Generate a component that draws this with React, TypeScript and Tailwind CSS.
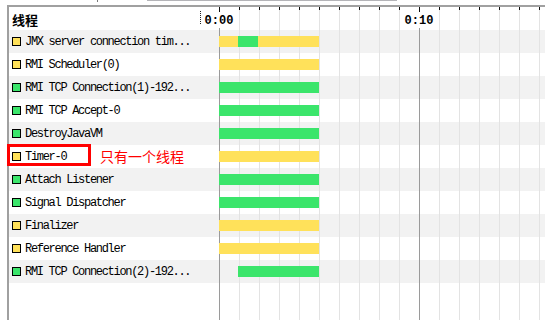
import React from "react";

type Seg = { s: number; w: number; c: "y" | "g" };
type Row = { name: string; c: "y" | "g"; segs: Seg[]; mark?: boolean };

const Y = "#ffe15a";
const G = "#3be56b";

const rows: Row[] = [
  { name: "JMX server connection tim...", c: "y", segs: [{ s: 0, w: 19, c: "y" }, { s: 19, w: 20, c: "g" }, { s: 39, w: 61, c: "y" }] },
  { name: "RMI Scheduler(0)", c: "y", segs: [{ s: 0, w: 100, c: "y" }] },
  { name: "RMI TCP Connection(1)-192...", c: "g", segs: [{ s: 0, w: 100, c: "g" }] },
  { name: "RMI TCP Accept-0", c: "g", segs: [{ s: 0, w: 100, c: "g" }] },
  { name: "DestroyJavaVM", c: "g", segs: [{ s: 0, w: 100, c: "g" }] },
  { name: "Timer-0", c: "y", segs: [{ s: 0, w: 100, c: "y" }], mark: true },
  { name: "Attach Listener", c: "g", segs: [{ s: 0, w: 100, c: "g" }] },
  { name: "Signal Dispatcher", c: "g", segs: [{ s: 0, w: 100, c: "g" }] },
  { name: "Finalizer", c: "y", segs: [{ s: 0, w: 100, c: "y" }] },
  { name: "Reference Handler", c: "y", segs: [{ s: 0, w: 100, c: "y" }] },
  { name: "RMI TCP Connection(2)-192...", c: "g", segs: [{ s: 19, w: 81, c: "g" }] },
];

function Grid() {
  const minors: number[] = [];
  for (let x = 239; x < 545; x += 20) if (x !== 419) minors.push(x);
  const ticks: number[] = [];
  for (let x = 219; x < 545; x += 20) ticks.push(x);
  return (
    <svg className="absolute left-0 top-0 z-10 pointer-events-none" width={545} height={320} viewBox="0 0 545 320">
      {minors.map((x) => (
        <line key={x} x1={x + 0.5} x2={x + 0.5} y1={7} y2={320} stroke="#e3e3e3" strokeWidth={1} />
      ))}
      <line x1={219.5} x2={219.5} y1={28} y2={320} stroke="#9a9a9a" strokeWidth={1} />
      <line x1={419.5} x2={419.5} y1={28} y2={320} stroke="#9a9a9a" strokeWidth={1} />
      {ticks.map((x) => (
        <line key={"t" + x} x1={x + 0.5} x2={x + 0.5} y1={7} y2={x === 219 || x === 419 ? 12 : 10} stroke="#111" strokeWidth={1} />
      ))}
      <line x1={200.5} x2={200.5} y1={11} y2={25} stroke="#222" strokeWidth={1} strokeDasharray="1 1" />
    </svg>
  );
}

export default function App() {
  return (
    <div className="relative w-[545px] h-[320px] overflow-hidden bg-white">
      <Grid />
      {/* top strip */}
      <div className="flex h-[5px] items-start">
        <div className="w-[97px]" />
        <div className="w-[1px] h-[2px] bg-[#777]" />
        <div className="w-[49px]" />
        <div className="w-[250px] h-[1px] bg-[#b4b4b8]" />
      </div>
      <div className="ml-[7px] h-[315px] border-l-2 border-t-2 border-[#a0a0a0] flex flex-col">
        {/* header */}
        <div className="flex h-[23px] items-center">
          <div className="w-[210px] pl-[3px] pt-[1px] text-[13px] font-bold text-black leading-none [font-family:'Noto_Sans_CJK_SC',sans-serif]">
            线程
          </div>
          <div className="relative flex-1 h-full">
            <span className="absolute left-0 top-[8px] -translate-x-1/2 text-[12px] font-bold leading-none text-black [font-family:'Liberation_Mono',monospace]">0:00</span>
            <span className="absolute left-[200px] top-[8px] -translate-x-1/2 text-[12px] font-bold leading-none text-black [font-family:'Liberation_Mono',monospace]">0:10</span>
          </div>
        </div>
        {rows.map((r, i) => (
          <div key={i} className={`relative flex h-[23px] items-center ${i % 2 === 0 ? "bg-[#f2f2f2]" : "bg-white"}`}>
            <div className="w-[210px] flex items-center pl-[3px] gap-[4px]">
              <span className="w-[9px] h-[9px] border border-black shrink-0" style={{ background: r.c === "y" ? Y : G }} />
              <span className="text-[12px] tracking-[-1.3px] leading-none text-black whitespace-nowrap [font-family:'Liberation_Mono',monospace]">
                {r.name}
              </span>
            </div>
            <div className="relative z-20 flex-1 flex items-center">
              <div className="flex h-[11px]">
                {r.segs.map((s, j) => (
                  <div key={j} className="h-full" style={{ width: s.w, marginLeft: j === 0 ? s.s : 0, background: s.c === "y" ? Y : G }} />
                ))}
              </div>
            </div>
            {r.mark && (
              <>
                <div className="absolute z-30 left-[-2px] top-[-1px] w-[84px] h-[22px] border-[3px] border-[#ff0000]" />
                <div className="absolute z-30 left-[91px] top-[4px] text-[14px] leading-none text-[#ff0000] [font-family:'Noto_Sans_CJK_SC',sans-serif]">
                  只有一个线程
                </div>
              </>
            )}
          </div>
        ))}
        <div className="flex-1" />
      </div>
    </div>
  );
}
